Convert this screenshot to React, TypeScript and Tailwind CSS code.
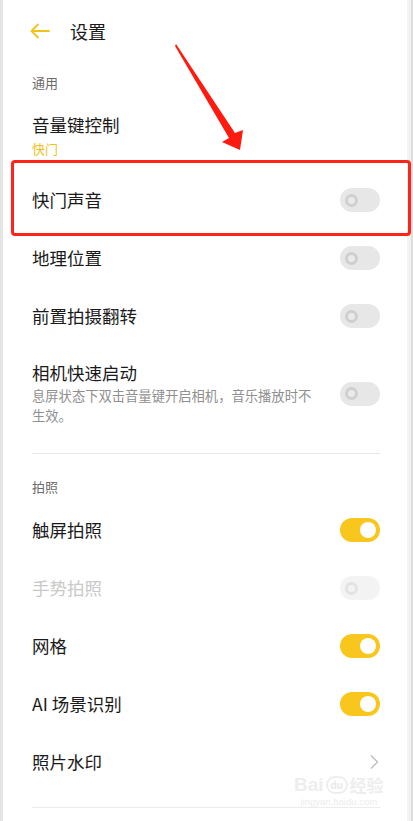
import React from "react";

const font = { fontFamily: '"Noto Sans CJK SC", "Noto Sans", sans-serif' };

function Toggle({ on, disabled }: { on?: boolean; disabled?: boolean }) {
  if (on) {
    return (
      <div className="w-[40px] h-[24px] rounded-full bg-[#f8c61c] flex items-center justify-end pr-[4px] shrink-0">
        <div className="w-[16px] h-[16px] rounded-full bg-white" />
      </div>
    );
  }
  return (
    <div
      className={
        "w-[40px] h-[24px] rounded-full flex items-center pl-[5px] shrink-0 " +
        (disabled ? "bg-[#f3f3f3]" : "bg-[#e7e7e7]")
      }
    >
      <div
        className={
          "w-[13px] h-[13px] rounded-full border-[3px] " +
          (disabled ? "border-[#e3e3e3] bg-[#f3f3f3]" : "border-[#cfcfcf] bg-[#eaeaea]")
        }
      />
    </div>
  );
}

function Row({
  title,
  on,
  disabled,
  chevron,
}: {
  title: string;
  on?: boolean;
  disabled?: boolean;
  chevron?: boolean;
}) {
  return (
    <div className="h-[58px] flex items-center justify-between">
      <span
        className={
          "text-[17.5px] leading-[24px] " + (disabled ? "text-[#c9c9c9]" : "text-[#1a1a1a]")
        }
      >
        {title}
      </span>
      {chevron ? (
        <svg width="10" height="16" viewBox="0 0 10 16" className="mr-[1px]">
          <path d="M2 1.5 L8.5 8 L2 14.5" fill="none" stroke="#bcbcbc" strokeWidth="1.3" />
        </svg>
      ) : (
        <Toggle on={on} disabled={disabled} />
      )}
    </div>
  );
}

export default function App() {
  return (
    <div className="relative w-[413px] h-[821px] overflow-hidden bg-white flex" style={font}>
      <div className="w-[3px] bg-[#e4e4e4] shrink-0" />
      <div className="flex-1 flex flex-col pl-[29px] pr-[27px]">
        {/* header */}
        <div className="h-[62px] flex items-center">
          <svg width="20" height="16" viewBox="0 0 20 16" className="-ml-[2px]">
            <path
              d="M1.5 8 H19 M8 1.5 L1.5 8 L8 14.5"
              fill="none"
              stroke="#f2c21b"
              strokeWidth="1.8"
              strokeLinecap="round"
              strokeLinejoin="round"
            />
          </svg>
          <span className="ml-[20px] text-[18px] leading-[24px] text-[#1a1a1a]">设置</span>
        </div>
        <div className="h-[42px] flex items-center">
          <span className="text-[13px] leading-[18px] text-[#6b6b6b]">通用</span>
        </div>
        <div className="pt-[9px] pb-[13px] flex flex-col">
          <span className="text-[17.5px] leading-[24px] text-[#1a1a1a]">音量键控制</span>
          <span className="mt-[3px] text-[13px] leading-[18px] text-[#f0c11d]">快门</span>
        </div>
        <Row title="快门声音" />
        <Row title="地理位置" />
        <Row title="前置拍摄翻转" />
        <div className="pt-[16px] pb-[13px] flex items-center justify-between">
          <div className="flex flex-col w-[284px]">
            <span className="text-[17.5px] leading-[24px] text-[#1a1a1a]">相机快速启动</span>
            <span className="mt-[1px] text-[13.3px] leading-[20px] text-[#8f8f8f]">
              息屏状态下双击音量键开启相机，音乐播放时不生效。
            </span>
          </div>
          <Toggle />
        </div>
        <div className="mt-[14px] h-px bg-[#e6e6e6]" />
        <div className="pt-[24px] pb-[5px]">
          <span className="block text-[13px] leading-[18px] text-[#6b6b6b]">拍照</span>
        </div>
        <Row title="触屏拍照" on />
        <Row title="手势拍照" disabled />
        <Row title="网格" on />
        <Row title="AI 场景识别" on />
        <Row title="照片水印" chevron />
        <div className="mt-[16px] h-px bg-[#ececec]" />
      </div>
      <div className="w-[6px] bg-[#f3f3f3] border-r-[2px] border-[#dedede] shrink-0" />

      {/* watermark */}
      <div className="absolute left-[294px] top-[774px] flex flex-col items-center pointer-events-none">
        <div className="flex items-center gap-[2px]">
          <span className="text-[19px] leading-[22px] font-bold text-[#eeeeee]" style={{ fontFamily: '"Liberation Sans", sans-serif' }}>
            Bai
          </span>
          <span className="w-[22px] h-[18px] rounded-full border-2 border-[#eeeeee] text-[10px] leading-[14px] text-center text-[#eaeaea] font-bold">
            du
          </span>
          <span className="text-[17px] leading-[22px] font-bold text-[#eeeeee]">经验</span>
        </div>
        <span className="text-[9.5px] leading-[12px] text-[#ededed]" style={{ fontFamily: '"Liberation Sans", sans-serif' }}>
          jingyan.baidu.com
        </span>
      </div>

      {/* red highlight box */}
      <div className="absolute left-[11px] top-[160px] w-[400px] h-[76px] border-[3px] border-[#ff2418] rounded-[4px] pointer-events-none" />

      {/* red arrow */}
      <svg className="absolute left-0 top-0 pointer-events-none" width="413" height="200" viewBox="0 0 413 200">
        <polygon
          points="176,44 235,133 243,130 240,150 222,142 229,138 175,46"
          fill="#ff1a10"
        />
      </svg>
    </div>
  );
}
